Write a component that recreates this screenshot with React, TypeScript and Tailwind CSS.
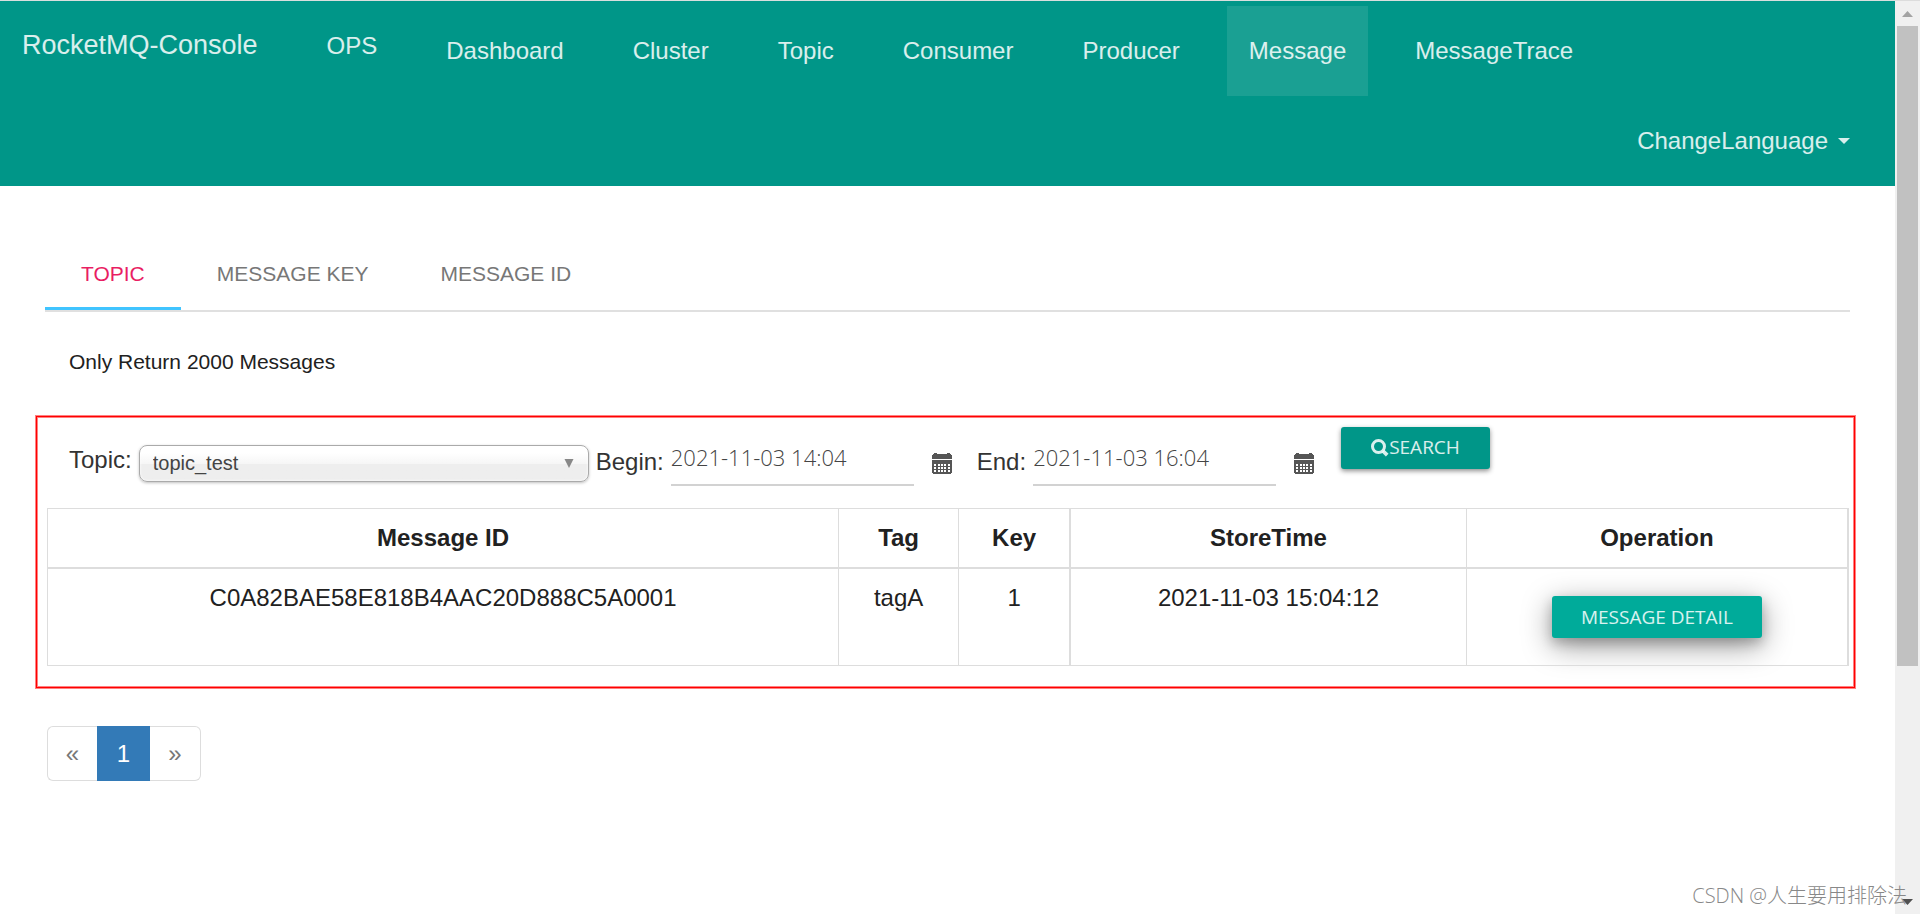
import { useState } from "react";

const navItems = ["Dashboard", "Cluster", "Topic", "Consumer", "Producer", "Message", "MessageTrace"];
const tabs = ["TOPIC", "MESSAGE KEY", "MESSAGE ID"];
const rows = [{ id: "C0A82BAE58E818B4AAC20D888C5A0001", tag: "tagA", key: "1", time: "2021-11-03 15:04:12" }];

function SearchIcon() {
  return (
    <svg viewBox="0 0 18 18" className="size-[18px]" fill="none" stroke="currentColor" aria-hidden="true">
      <circle cx="7.500" cy="7.500" r="6" strokeWidth="3" />
      <path d="M12 12 L16.200 16.200" strokeWidth="3.800" />
    </svg>
  );
}

function CalendarIcon() {
  return (
    <svg viewBox="0 0 20 21" className="h-[21px] w-5" fill="#555" shapeRendering="crispEdges" aria-hidden="true">
      <path d="M2 0h3v1h10V0h3v1h1v1h1v4H0V2h1V1h1z" />
      <path
        fillRule="evenodd"
        d="M0 7h20v13h-1v1H1v-1H0zM2 11v2h2v-2zM6 11v2h2v-2zM9 11v2h2v-2zM12 11v2h2v-2zM16 11v2h2v-2zM2 14v2h2v-2zM6 14v2h2v-2zM9 14v2h2v-2zM12 14v2h2v-2zM16 14v2h2v-2zM2 17v2h2v-2zM6 17v2h2v-2zM9 17v2h2v-2zM12 17v2h2v-2zM16 17v2h2v-2z"
      />
    </svg>
  );
}

function DateField({ id, label, initial }: { id: string; label: string; initial: string }) {
  const [value, setValue] = useState(initial);
  return (
    <div className="flex items-center gap-[7px]">
      <label htmlFor={id} className="pb-1">
        {label}
      </label>
      <div className="flex items-center">
        <input
          id={id}
          type="text"
          value={value}
          onChange={(e) => setValue(e.target.value)}
          className="h-[45px] w-[243px] border-b-2 border-[#d2d2d2] bg-transparent pb-3 font-['Open_Sans',sans-serif] text-[22px] font-light text-[#444] outline-none"
        />
        <button type="button" aria-label={`Pick ${label}`} className="px-[18px]">
          <CalendarIcon />
        </button>
      </div>
    </div>
  );
}

function Header() {
  return (
    <header className="border-t border-[#d9dfde] bg-[#009688] text-2xl text-white/85">
      <div className="flex items-start gap-[25px]">
        <a href="#" className="flex h-[90px] items-center pr-[22px] pl-[22px] text-[27px]">
          RocketMQ-Console
        </a>
        <a href="#ops" className="flex h-[90px] items-center px-[22px]">
          OPS
        </a>
        <nav className="mt-[5px] flex gap-[25px]">
          {navItems.map((item) => (
            <a
              key={item}
              href={`#${item}`}
              className={`flex h-[90px] items-center px-[22px] ${item === "Message" ? "bg-[#1aa093]" : ""}`}
            >
              {item}
            </a>
          ))}
        </nav>
      </div>
      <div className="flex justify-end pr-[23px]">
        <button type="button" className="flex h-[90px] items-center gap-[10px] px-[22px]">
          ChangeLanguage
          <svg viewBox="0 0 12 6" className="h-[6px] w-3" fill="currentColor" aria-hidden="true">
            <path d="M0 0h12L6 6z" />
          </svg>
        </button>
      </div>
    </header>
  );
}

function ScrollTrack() {
  return (
    <div className="flex w-[25px] shrink-0 flex-col border-t border-[#dcdcdc] bg-[#f0f0f0]" aria-hidden="true">
      <svg viewBox="0 0 25 25" className="size-[25px]" fill="#a3a3a3">
        <path d="M7 16h11l-5.500-6z" />
      </svg>
      <div className="mx-[2px] grow-[640] basis-0 bg-[#c1c1c1]" />
      <div className="grow-[223] basis-0" />
      <svg viewBox="0 0 25 25" className="size-[25px]" fill="#505050">
        <path d="M7 10h11l-5.500 6z" />
      </svg>
    </div>
  );
}

export default function App() {
  const [tab, setTab] = useState("TOPIC");
  const cell = "border border-[#ddd] px-3 py-3 text-center align-top";
  return (
    <div className="relative flex min-h-screen bg-white font-['Liberation_Sans',Arial,sans-serif] text-[#212121]">
      <div className="min-w-0 flex-1">
        <Header />
        <main className="pt-[54px] pr-10 pl-9">
          <div role="tablist" className="mr-[5px] ml-[9px] flex border-b-2 border-[#e0e0e0]">
            {tabs.map((t) => (
              <button
                key={t}
                type="button"
                role="tab"
                aria-selected={tab === t}
                onClick={() => setTab(t)}
                className={`h-[70px] border-b-[3px] px-9 text-[21px] ${
                  tab === t ? "border-[#40c4ff] text-[#e91e63]" : "border-transparent text-[#777]"
                }`}
              >
                {t}
              </button>
            ))}
          </div>

          <p className="mt-[35px] pl-[33px] text-[21px] leading-[30px]">Only Return 2000 Messages</p>

          <section className="mt-[39px] border border-[#ff0000] pr-[5px] pb-[21px] pl-[10px] shadow-[0_0_0_1px_#ff8080,inset_0_0_0_1px_#ff8080]">
            <form
              className="flex items-start pt-[10px] pb-[22px] pl-[22px] text-2xl text-[#333]"
              onSubmit={(e) => e.preventDefault()}
            >
              <div className="mt-[14px] flex items-center gap-[7px]">
                <label htmlFor="topic" className="pb-2">
                  Topic:
                </label>
                <div className="relative">
                  <select
                    id="topic"
                    className="block h-[37px] w-[450px] appearance-none rounded-lg border border-[#aaa] bg-linear-to-b from-white from-20% via-[#f6f6f6] via-50% to-[#eee] to-52% px-[13px] text-[20px] text-[#444] shadow-[0_0_3px_white_inset,0_1px_3px_rgba(0,0,0,0.25)] outline-none"
                  >
                    <option>topic_test</option>
                  </select>
                  <svg
                    viewBox="0 0 10 9"
                    className="pointer-events-none absolute top-[14px] right-[15px] h-[9px] w-[10px]"
                    fill="#888"
                    aria-hidden="true"
                  >
                    <path d="M0.500 0h9L5 9z" />
                  </svg>
                </div>
                <DateField id="begin" label="Begin:" initial="2021-11-03 14:04" />
                <DateField id="end" label="End:" initial="2021-11-03 16:04" />
              </div>
              <button
                type="submit"
                className="ml-[9px] flex h-[42px] items-center rounded-[3px] bg-[#009688] px-[30px] font-['Open_Sans',sans-serif] text-[19px] text-white/85 shadow-[0_2px_5px_rgba(0,0,0,0.45)]"
              >
                <SearchIcon />
                SEARCH
              </button>
            </form>

            <table className="w-full table-fixed border-collapse text-2xl leading-[34px]">
              <colgroup>
                <col className="w-[43.94%]" />
                <col className="w-[6.66%]" />
                <col className="w-[6.2%]" />
                <col className="w-[22%]" />
                <col />
              </colgroup>
              <thead>
                <tr>
                  <th className={`${cell} border-b-2`}>Message ID</th>
                  <th className={`${cell} border-b-2`}>Tag</th>
                  <th className={`${cell} border-r-2 border-b-2`}>Key</th>
                  <th className={`${cell} border-b-2`}>StoreTime</th>
                  <th className={`${cell} border-r-2 border-b-2`}>Operation</th>
                </tr>
              </thead>
              <tbody>
                {rows.map((r) => (
                  <tr key={r.id}>
                    <td className={cell}>{r.id}</td>
                    <td className={cell}>{r.tag}</td>
                    <td className={`${cell} border-r-2`}>{r.key}</td>
                    <td className={cell}>{r.time}</td>
                    <td className={`${cell} border-r-2`}>
                      <button
                        type="button"
                        className="mx-auto my-[15px] block h-[42px] rounded-[3px] bg-[#00ab9a] px-[29px] font-['Open_Sans',sans-serif] text-[19px] text-white/85 shadow-[0_8px_30px_rgba(0,0,0,0.4),0_5px_12px_rgba(0,0,0,0.2)]"
                      >
                        MESSAGE DETAIL
                      </button>
                    </td>
                  </tr>
                ))}
              </tbody>
            </table>
          </section>

          <nav aria-label="Pages" className="mt-[38px] mb-10 ml-[11px] flex h-[55px] text-2xl">
            <button type="button" aria-label="Previous" className="w-[50px] rounded-l-md border border-r-0 border-[#ddd] text-[#777]">
              «
            </button>
            <button type="button" className="w-[53px] bg-[#337ab7] text-white">
              1
            </button>
            <button type="button" aria-label="Next" className="w-[51px] rounded-r-md border border-l-0 border-[#ddd] text-[#777]">
              »
            </button>
          </nav>
        </main>
      </div>
      <ScrollTrack />
      <div className="pointer-events-none absolute right-[13px] bottom-1 font-['Open_Sans','Noto_Sans_CJK_SC',sans-serif] text-[20px] leading-7 font-light text-[#888]">
        CSDN @人生要用排除法
      </div>
    </div>
  );
}
